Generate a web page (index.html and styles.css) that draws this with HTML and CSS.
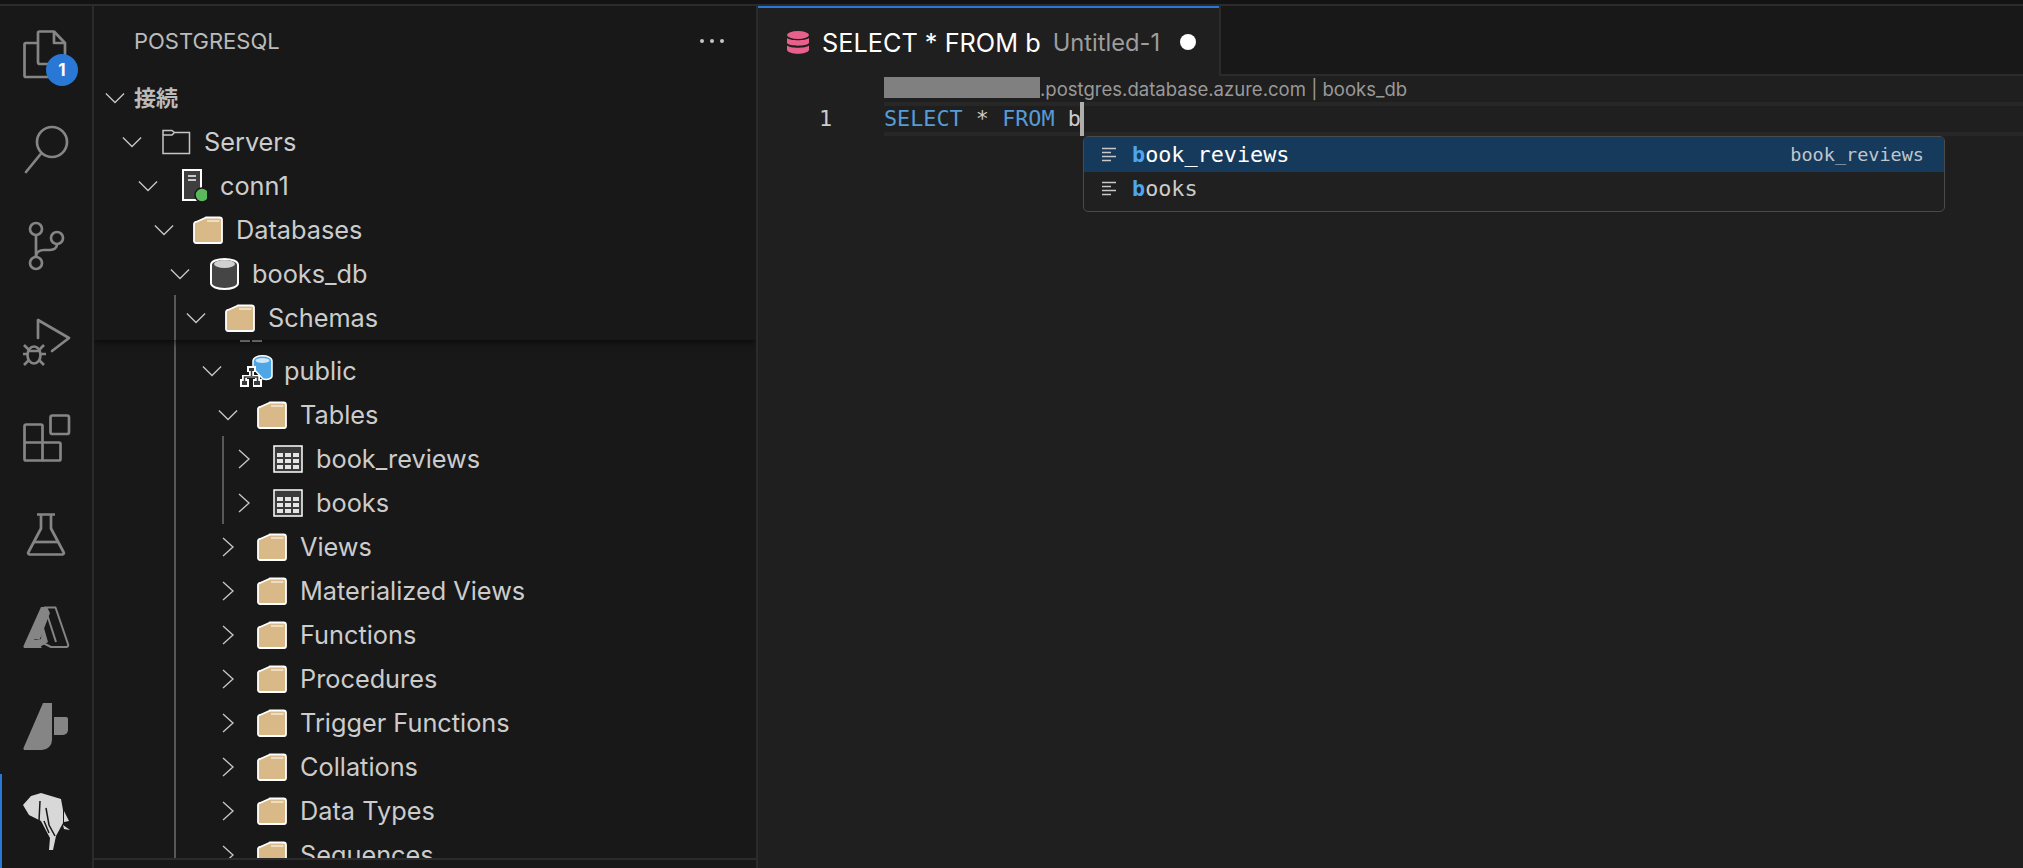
FILE: index.html
```html
<!DOCTYPE html>
<html lang="ja">
<head>
<meta charset="utf-8">
<title>PostgreSQL</title>
<link rel="stylesheet" href="styles.css">
</head>
<body>
<div class="topline"></div>
<div class="app">
  <nav class="activity">
    <div class="act"><svg width="48" height="48" viewBox="0 0 48 48" fill="none" stroke="#858585" stroke-width="2.700" stroke-linejoin="round"><path d="M15 3a1.500 1.500 0 0 1 1.500-1.500H31L42 13v19a2 2 0 0 1-2 2H17a2 2 0 0 1-2-2z"/><path d="M31 1.500V13h11"/><path d="M15 13H3a1.500 1.500 0 0 0-1.500 1.500v31A1.500 1.500 0 0 0 3 47h23a2 2 0 0 0 2-2v-10"/></svg><span class="badge">1</span></div>
    <div class="act"><svg width="48" height="48" viewBox="0 0 48 48" fill="none" stroke="#858585" stroke-width="2.700"><circle cx="29" cy="16" r="15"/><path d="M18.500 27L3 46" stroke-linecap="round"/></svg></div>
    <div class="act"><svg width="48" height="48" viewBox="0 0 48 48" fill="none" stroke="#858585" stroke-width="2.700"><circle cx="13" cy="7" r="6"/><circle cx="13" cy="41" r="6"/><circle cx="34" cy="16" r="6"/><path d="M13 13v22"/><path d="M34 22c0 4-3 6-7 6h-6c-4 0-8 2-8 7"/></svg></div>
    <div class="act"><svg width="48" height="48" viewBox="0 0 48 48" fill="none" stroke="#858585" stroke-width="2.700"><path d="M15 20V2l31 18-17 13" stroke-linecap="round" stroke-linejoin="round"/><ellipse cx="11" cy="37" rx="6.500" ry="8.500"/><path d="M6 33h10M1 27l5 5M21 27l-5 5M0 36h4M18 36h5M1 47l5-5M21 47l-5-5"/></svg></div>
    <div class="act"><svg width="48" height="48" viewBox="0 0 48 48" fill="none" stroke="#858585" stroke-width="2.700" stroke-linejoin="round"><rect x="27.500" y="1.500" width="18.500" height="18.500" rx="2"/><path d="M3 10.500h15a1.500 1.500 0 0 1 1.500 1.500v34.500H3A1.500 1.500 0 0 1 1.500 45V12A1.500 1.500 0 0 1 3 10.500z"/><path d="M1.500 28.500H36a1.500 1.500 0 0 1 1.500 1.500v15a1.500 1.500 0 0 1-1.500 1.500H19.500"/></svg></div>
    <div class="act"><svg width="48" height="48" viewBox="0 0 48 48" fill="none" stroke="#858585" stroke-width="2.700" stroke-linejoin="round"><path d="M14 4.500h18M18 4.500v14L5.500 42a1.500 1.500 0 0 0 1 2.500h33a1.500 1.500 0 0 0 1-2.500L28 18.500v-14"/><path d="M11 32h24"/></svg></div>
    <div class="act"><svg width="48" height="48" viewBox="0 0 48 48"><path d="M18 1h6L27 7 17 33l-6 0 8 9H2a1.500 1.500 0 0 1-1.500-2z" fill="#858585"/><path d="M19 15l6 21-8 5-7-7 8-1z" fill="#858585"/><path d="M21 1.500h11.500L45 38a2 2 0 0 1-2 3H28l-8-4" fill="none" stroke="#858585" stroke-width="2" stroke-linejoin="round"/><path d="M22 2l11 34" stroke="#858585" stroke-width="2"/></svg></div>
    <div class="act"><svg width="48" height="48" viewBox="0 0 48 48"><path d="M20 1h9v37a10 10 0 0 1-10 10H2a1.500 1.500 0 0 1-1.500-2z" fill="#858585"/><path d="M31 15h12a2 2 0 0 1 2 2v11a5 5 0 0 1-5 5h-9z" fill="#858585"/></svg></div>
    <div class="act act-on"><svg width="48" height="58" viewBox="0 0 48 58"><path d="M0 12L8 3 18 0l20 6 2 11v13l-7 13-3 14-4 0 1-12-9-17-12-6z" fill="#d8d8d8"/><path d="M41 18l5 10-5 1zM40 32l7 5-6-1z" fill="#d8d8d8"/><path d="M17 8l-1 20M23 15l3 17 6 11M21 28l5 12" fill="none" stroke="#181818" stroke-width="1.500"/></svg></div>
  </nav>
  <aside class="side">
    <header class="side-head"><span>POSTGRESQL</span><span class="dots"><i></i><i></i><i></i></span></header>
    <div class="tree-wrap">
      <div class="tree-sticky">
        <div class="row section lv0"><svg class="chev"><use href="#down"/></svg><span>接続</span></div>
        <div class="row lv1"><svg class="chev"><use href="#down"/></svg><svg class="ic" viewBox="0 0 30 34"><path d="M2 5.500V28.500H28.500V7.500H13.500L11 5.500zM2 10H11L13.500 7.500" fill="none" stroke="#c5c5c5" stroke-width="1.500"/></svg><span>Servers</span></div>
        <div class="row lv2"><svg class="chev"><use href="#down"/></svg><svg class="ic" viewBox="0 0 30 34"><path d="M6 1h18v30H6z" fill="#3f3f3f" stroke="#fff" stroke-width="2"/><path d="M11 7h8M11 11h8" stroke="#c8c8c8" stroke-width="2"/><circle cx="25" cy="26" r="7" fill="#5cb85c" stroke="#181818" stroke-width="1.500"/></svg><span>conn1</span></div>
        <div class="row lv3"><svg class="chev"><use href="#down"/></svg><svg class="ic"><use href="#fold"/></svg><span>Databases</span></div>
        <div class="row lv4"><svg class="chev"><use href="#down"/></svg><svg class="ic" viewBox="0 0 30 34"><path d="M2 8c0-8 27-8 27 0v18c0 8-27 8-27 0z" fill="#454545" stroke="#fff" stroke-width="2"/><ellipse cx="15.500" cy="7" rx="10.500" ry="4" fill="#d0d0d0"/></svg><span>books_db</span></div>
        <div class="row lv5"><svg class="chev"><use href="#down"/></svg><svg class="ic"><use href="#fold"/></svg><span>Schemas</span></div>
      </div>
      <div class="tree-body">
        <div class="row lv6"><svg class="chev"><use href="#down"/></svg><svg class="ic ic-over" viewBox="0 0 30 34"><path d="M12 7c0-7 19-7 19 0v15c0 3-5 4-9 3l-10-11z" fill="#4fa6e6" stroke="#fff" stroke-width="1.500"/><ellipse cx="21.500" cy="6.500" rx="7" ry="2.500" fill="#cfe6f7"/><path d="M6 12h9v6h-2v3h6v4h2v8h-9v-8h2v-1H6v1h2v8H-1v-8h2v-4h7v-3H6z" fill="#fff"/><path d="M8 14h5v3H8zM1 27h5v4H1zM13 27h6v4h-6z" fill="#3a3a3a"/><path d="M10.500 17v5M3.500 27v-4h13v4" fill="none" stroke="#3a3a3a" stroke-width="1.500"/></svg><span>public</span></div>
        <div class="row lv7"><svg class="chev"><use href="#down"/></svg><svg class="ic"><use href="#fold"/></svg><span>Tables</span></div>
        <div class="row lv8"><svg class="chev"><use href="#right"/></svg><svg class="ic"><use href="#tbl"/></svg><span>book_reviews</span></div>
        <div class="row lv8"><svg class="chev"><use href="#right"/></svg><svg class="ic"><use href="#tbl"/></svg><span>books</span></div>
        <div class="row lv7"><svg class="chev"><use href="#right"/></svg><svg class="ic"><use href="#fold"/></svg><span>Views</span></div>
        <div class="row lv7"><svg class="chev"><use href="#right"/></svg><svg class="ic"><use href="#fold"/></svg><span>Materialized Views</span></div>
        <div class="row lv7"><svg class="chev"><use href="#right"/></svg><svg class="ic"><use href="#fold"/></svg><span>Functions</span></div>
        <div class="row lv7"><svg class="chev"><use href="#right"/></svg><svg class="ic"><use href="#fold"/></svg><span>Procedures</span></div>
        <div class="row lv7"><svg class="chev"><use href="#right"/></svg><svg class="ic"><use href="#fold"/></svg><span>Trigger Functions</span></div>
        <div class="row lv7"><svg class="chev"><use href="#right"/></svg><svg class="ic"><use href="#fold"/></svg><span>Collations</span></div>
        <div class="row lv7"><svg class="chev"><use href="#right"/></svg><svg class="ic"><use href="#fold"/></svg><span>Data Types</span></div>
        <div class="row lv7"><svg class="chev"><use href="#right"/></svg><svg class="ic"><use href="#fold"/></svg><span>Sequences</span></div>
        <span class="guide guide-a"></span>
        <span class="guide guide-b"></span>
      </div>
      <span class="guide guide-c"></span>
    </div>
  </aside>
  <main class="main">
    <div class="tabs">
      <div class="tab">
        <svg class="dbicon" viewBox="0 0 22 23"><ellipse cx="11" cy="4" rx="11" ry="4" fill="#e8618c"/><path d="M0 7c3 3 19 3 22 0v5c-2 3.500-20 3.500-22 0zM0 14.500c3 3 19 3 22 0V19c-2 5-20 5-22 0z" fill="#e8618c"/></svg>
        <span class="tab-name">SELECT * FROM b</span>
        <span class="tab-desc">Untitled-1</span>
        <span class="tab-dot"></span>
      </div>
      <div class="tabs-rest"></div>
    </div>
    <div class="editor">
      <div class="gutter">1</div>
      <div class="code">
        <div class="lens"><span class="redact"></span><span class="lens-text">.postgres.database.azure.com | books_db</span></div>
        <div class="line"><span class="kw">SELECT</span> * <span class="kw">FROM</span> b<span class="cursor"></span></div>
        <div class="suggest">
          <div class="sug sug-on"><svg class="sug-ic"><use href="#sym"/></svg><span class="sug-label"><b>b</b>ook_reviews</span><span class="sug-detail">book_reviews</span></div>
          <div class="sug sug-off"><svg class="sug-ic"><use href="#sym"/></svg><span class="sug-label"><b>b</b>ooks</span></div>
        </div>
      </div>
    </div>
  </main>
</div>
<svg class="defs" aria-hidden="true">
  <defs>
    <symbol id="down" viewBox="0 0 22 22"><path d="M1 6l10 10L21 6" fill="none" stroke="#c5c5c5" stroke-width="1.500"/></symbol>
    <symbol id="right" viewBox="0 0 22 22"><path d="M5.500 1l11 10-11 10" fill="none" stroke="#c5c5c5" stroke-width="1.500"/></symbol>
    <symbol id="fold" viewBox="0 0 30 28"><path d="M3 6l9-4a2 2 0 0 1 1-.5h13.500A2.500 2.500 0 0 1 29 4v21a2 2 0 0 1-2 2H3a2 2 0 0 1-2-2V8a2 2 0 0 1 2-2z" fill="#d8b987" stroke="#fff" stroke-width="1.800"/><path d="M14 5h12.500" stroke="#f3ead8" stroke-width="1.500"/></symbol>
    <symbol id="tbl" viewBox="0 0 30 28"><path d="M1 1h28v26H1z" fill="#3a3a3a" stroke="#fff" stroke-width="1.500"/><path d="M4 8h6v4H4zM12 8h6v4h-6zM20 8h6v4h-6zM4 14h6v4H4zM12 14h6v4h-6zM20 14h6v4h-6zM4 20h6v4H4zM12 20h6v4h-6zM20 20h6v4h-6z" fill="#e4e4e4"/></symbol>
    <symbol id="sym" viewBox="0 0 14 15"><path d="M0 1.500h14M0 5.500h9M0 9.500h14M0 13.500h9" stroke="#c8c8c8" stroke-width="1.500"/></symbol>
  </defs>
</svg>
</body>
</html>
```

FILE: styles.css
```css
* { box-sizing: border-box; }
html, body { margin: 0; height: 100%; overflow: hidden; background: #181818; }
body { font-family: Inter, "Noto Sans CJK JP", sans-serif; color: #cccccc; display: flex; flex-direction: column; }
.defs { width: 0; height: 0; position: absolute; }
.topline { height: 6px; background: #131313; border-bottom: 2px solid #2b2b2b; flex: none; }
.app { flex: 1; display: flex; min-height: 0; }

.activity { width: 94px; flex: none; border-right: 2px solid #2b2b2b; display: flex; flex-direction: column; padding-top: 24px; gap: 48px; background: #181818; }
.act { position: relative; height: 48px; padding-left: 23px; flex: none; }
.act svg { display: block; overflow: visible; }
.act-on { margin-top: -5px; }
.act-on::before { content: ""; position: absolute; left: 0; top: -19px; width: 2px; height: 94px; background: #2a78d6; }
.badge { position: absolute; left: 46px; top: 24px; width: 32px; height: 32px; border-radius: 50%; background: #2a78d6; color: #fff; font-size: 17px; font-weight: 700; display: flex; align-items: center; justify-content: center; }

.side { width: 664px; flex: none; border-right: 2px solid #2b2b2b; display: flex; flex-direction: column; background: #181818; }
.side-head { height: 70px; flex: none; padding: 0 32px 0 40px; display: flex; align-items: center; justify-content: space-between; font-size: 22px; color: #bbbbbb; }
.dots { display: flex; gap: 6px; }
.dots i { width: 4px; height: 4px; border-radius: 50%; background: #c5c5c5; }

.tree-wrap { position: relative; height: 784px; flex: none; overflow: hidden; border-bottom: 2px solid #2b2b2b; }
.tree-sticky { position: relative; z-index: 2; background: #181818; box-shadow: 0 3px 6px rgba(0, 0, 0, 0.5); height: 264px; overflow: hidden; }
.tree-body { position: relative; margin-top: 9px; }
.tree-body::before { content: ""; position: absolute; left: 146px; top: -9px; width: 10px; height: 2px; background: #999999; box-shadow: 12px 0 #999999; }
.row { height: 44px; display: flex; align-items: center; font-size: 25.300px; color: #cccccc; white-space: nowrap; }
.row span { line-height: 44px; }
.section { font-size: 22px; font-weight: 700; color: #bbbbbb; }
.chev { width: 20px; height: 20px; flex: none; margin-right: 19px; }
.ic { width: 30px; height: 34px; flex: none; margin-right: 13px; }
.ic-over { overflow: visible; }
.section .chev { margin-right: 9px; }
.lv0 { padding-left: 11px; }
.lv1 { padding-left: 28px; }
.lv2 { padding-left: 44px; }
.lv3 { padding-left: 60px; }
.lv4 { padding-left: 76px; }
.lv5 { padding-left: 92px; }
.lv6 { padding-left: 108px; }
.lv7 { padding-left: 124px; }
.lv8 { padding-left: 140px; }
.guide { position: absolute; width: 2px; background: #585858; }
.guide-a { left: 80px; top: -10px; height: 600px; }
.guide-b { left: 128px; top: 87px; height: 88px; }
.guide-c { left: 80px; top: 219px; height: 45px; z-index: 3; }

.main { flex: 1; min-width: 0; display: flex; flex-direction: column; background: #1f1f1f; }
.tabs { display: flex; height: 70px; flex: none; background: #181818; }
.tab { width: 461px; flex: none; background: #1f1f1f; border-top: 2px solid #2a78d6; display: flex; align-items: center; padding-left: 29px; }
.dbicon { width: 22px; height: 23px; flex: none; margin-right: 13px; }
.tab-name { font-size: 25.300px; color: #ffffff; margin-right: 12px; white-space: nowrap; }
.tab-desc { font-size: 23.700px; color: #9d9d9d; white-space: nowrap; }
.tab-dot { width: 16px; height: 16px; border-radius: 50%; background: #fff; margin-left: 20px; }
.tabs-rest { flex: 1; border-left: 2px solid #2b2b2b; border-bottom: 2px solid #2b2b2b; }

.editor { flex: 1; display: flex; min-height: 0; font-family: "DejaVu Sans Mono", monospace; font-size: 21.800px; }
.gutter { width: 126px; flex: none; text-align: right; padding: 26px 52px 0 0; line-height: 34px; color: #cccccc; }
.code { flex: 1; min-width: 0; position: relative; }
.lens { height: 26px; padding-top: 1px; display: flex; align-items: flex-start; font-family: Inter, sans-serif; font-size: 18.550px; color: #999999; }
.redact { width: 156px; height: 21px; background: #808080; }
.lens-text { line-height: 24px; }
.line { height: 34px; border-top: 4px solid #272727; border-bottom: 4px solid #272727; line-height: 26px; color: #cccccc; position: relative; white-space: pre; }
.kw { color: #569cd6; }
.cursor { position: absolute; left: 196px; top: -4px; width: 4px; height: 34px; background: #aeafad; }
.suggest { position: absolute; left: 199px; top: 60px; width: 862px; height: 76px; background: #202020; border: 1px solid #4a4a4a; border-radius: 5px; }
.sug { display: flex; align-items: center; padding: 0 20px 0 18px; color: #cccccc; }
.sug-on { height: 35px; background: #163a5c; color: #fff; }
.sug-off { height: 33px; }
.sug-ic { width: 14px; height: 15px; flex: none; margin-right: 16px; }
.sug-label { flex: 1; white-space: pre; }
.sug-label b { color: #4da6f0; font-weight: 700; }
.sug-detail { font-size: 18.500px; color: #c0c6cc; }
```
